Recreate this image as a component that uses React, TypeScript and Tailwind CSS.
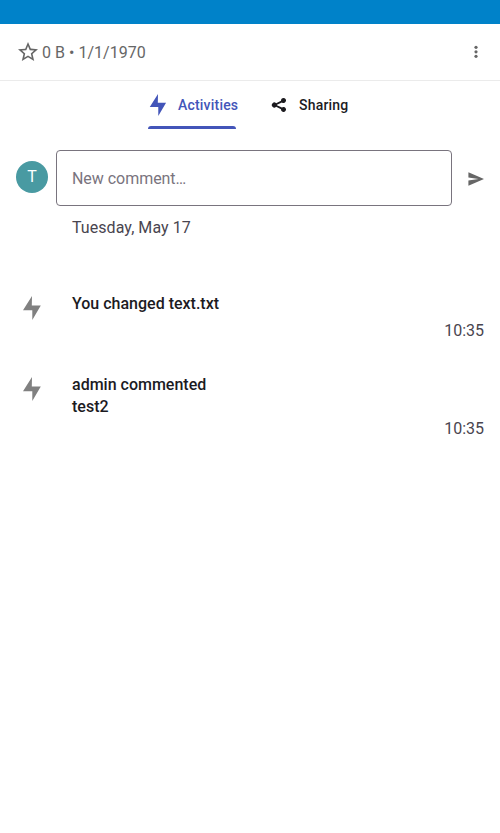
function Bolt({ className }: { className: string }) {
  return (
    <svg viewBox="0 0 24 24" className={className} fill="currentColor">
      <path d="M12 0 3 14.2h9.3L12.3 24 20.8 9.6h-9z" />
    </svg>
  );
}

function Activity({ lines }: { lines: string[] }) {
  return (
    <div className="flex px-4">
      <Bolt className="mt-[3px] ml-1 size-6 shrink-0 text-[#808080]" />
      <div className="ml-7 flex-1">
        <div className="min-h-[27px]">
          {lines.map((line) => (
            <p key={line} className="text-[16px] leading-[22px] font-medium text-[#1c1b1f]">{line}</p>
          ))}
        </div>
        <p className="text-right text-[16px] leading-[22px] text-[#49454f]">10:35</p>
      </div>
    </div>
  );
}

export default function App() {
  return (
    <div className="h-[833px] w-[500px] overflow-hidden bg-white font-['Roboto',sans-serif]">
      <div className="h-6 bg-[#0082c9]" />
      <header className="flex h-[57px] items-center border-b border-[#ebebeb] pr-3 pl-4 text-[#666666]">
        <svg viewBox="0 0 24 24" className="size-6" fill="currentColor">
          <path d="M22 9.24l-7.19-.62L12 2 9.19 8.63 2 9.24l5.46 4.73L5.82 21 12 17.27 18.18 21l-1.63-7.03L22 9.24zM12 15.4l-3.76 2.27 1-4.28-3.32-2.88 4.38-.38L12 6.1l1.71 4.04 4.38.38-3.32 2.88 1 4.28L12 15.4z" />
        </svg>
        <span className="ml-0.5 flex-1 pt-0.5 text-[16px] tracking-[0.03px]">0 B • 1/1/1970</span>
        <svg viewBox="0 0 24 24" className="size-6" fill="currentColor">
          <circle cx="12" cy="7.3" r="1.6" />
          <circle cx="12" cy="11.8" r="1.6" />
          <circle cx="12" cy="16.3" r="1.6" />
        </svg>
      </header>
      <nav className="flex h-12 justify-center text-[14px] font-medium tracking-[0.2px]">
        <div className="flex w-[88px] flex-col">
          <div className="flex h-[45px] items-center pt-1 whitespace-nowrap text-[#4355b9]">
            <Bolt className="-mt-px -ml-0.5 size-6 shrink-0 p-px" />
            <span className="ml-2">Activities</span>
          </div>
          <div className="h-[3px] rounded-t-[3px] bg-[#4355b9]" />
        </div>
        <div className="ml-[35px] flex h-[45px] w-[81px] items-center pt-1 text-[#1c1b1f]">
          <svg viewBox="0 0 16 16" className="-mt-px size-4 shrink-0" fill="currentColor">
            <path d="M12.5 1a2.5 2.5 0 0 0-2.5 2.5l.02.3-4.9 2.45A2.5 2.5 0 1 0 5.1 9.8l4.92 2.4a2.5 2.5 0 1 0 .85-1.63L5.98 8.15V7.85l4.9-2.45A2.5 2.5 0 1 0 12.5 1z" />
          </svg>
          <span className="ml-3">Sharing</span>
        </div>
      </nav>
      <main>
        <div className="mt-[21px] flex h-14 items-center px-4">
          <div className="-mt-0.5 flex size-8 items-center justify-center rounded-full bg-[#499aa2] text-[16px] text-white">T</div>
          <div className="ml-2 flex h-14 w-[396px] shrink-0 items-center rounded-[4px] border border-[#79747e] px-[15px] pt-0.5 text-[16px] tracking-[-0.04px] text-[#79747e]">New comment…</div>
          <svg viewBox="0 0 16 14" className="mt-0.5 ml-4 h-[14px] w-4 shrink-0" fill="#666666">
            <path d="M.4.2 16 7 .4 13.8V8.6L10.5 7 .4 5.4z" />
          </svg>
        </div>
        <h2 className="mt-[11px] ml-[72px] text-[16px] leading-[22px] tracking-[0.06px] text-[#49454f]">Tuesday, May 17</h2>
        <section className="mt-[54px] flex flex-col gap-8">
          <Activity lines={["You changed text.txt"]} />
          <Activity lines={["admin commented", "test2"]} />
        </section>
      </main>
    </div>
  );
}
